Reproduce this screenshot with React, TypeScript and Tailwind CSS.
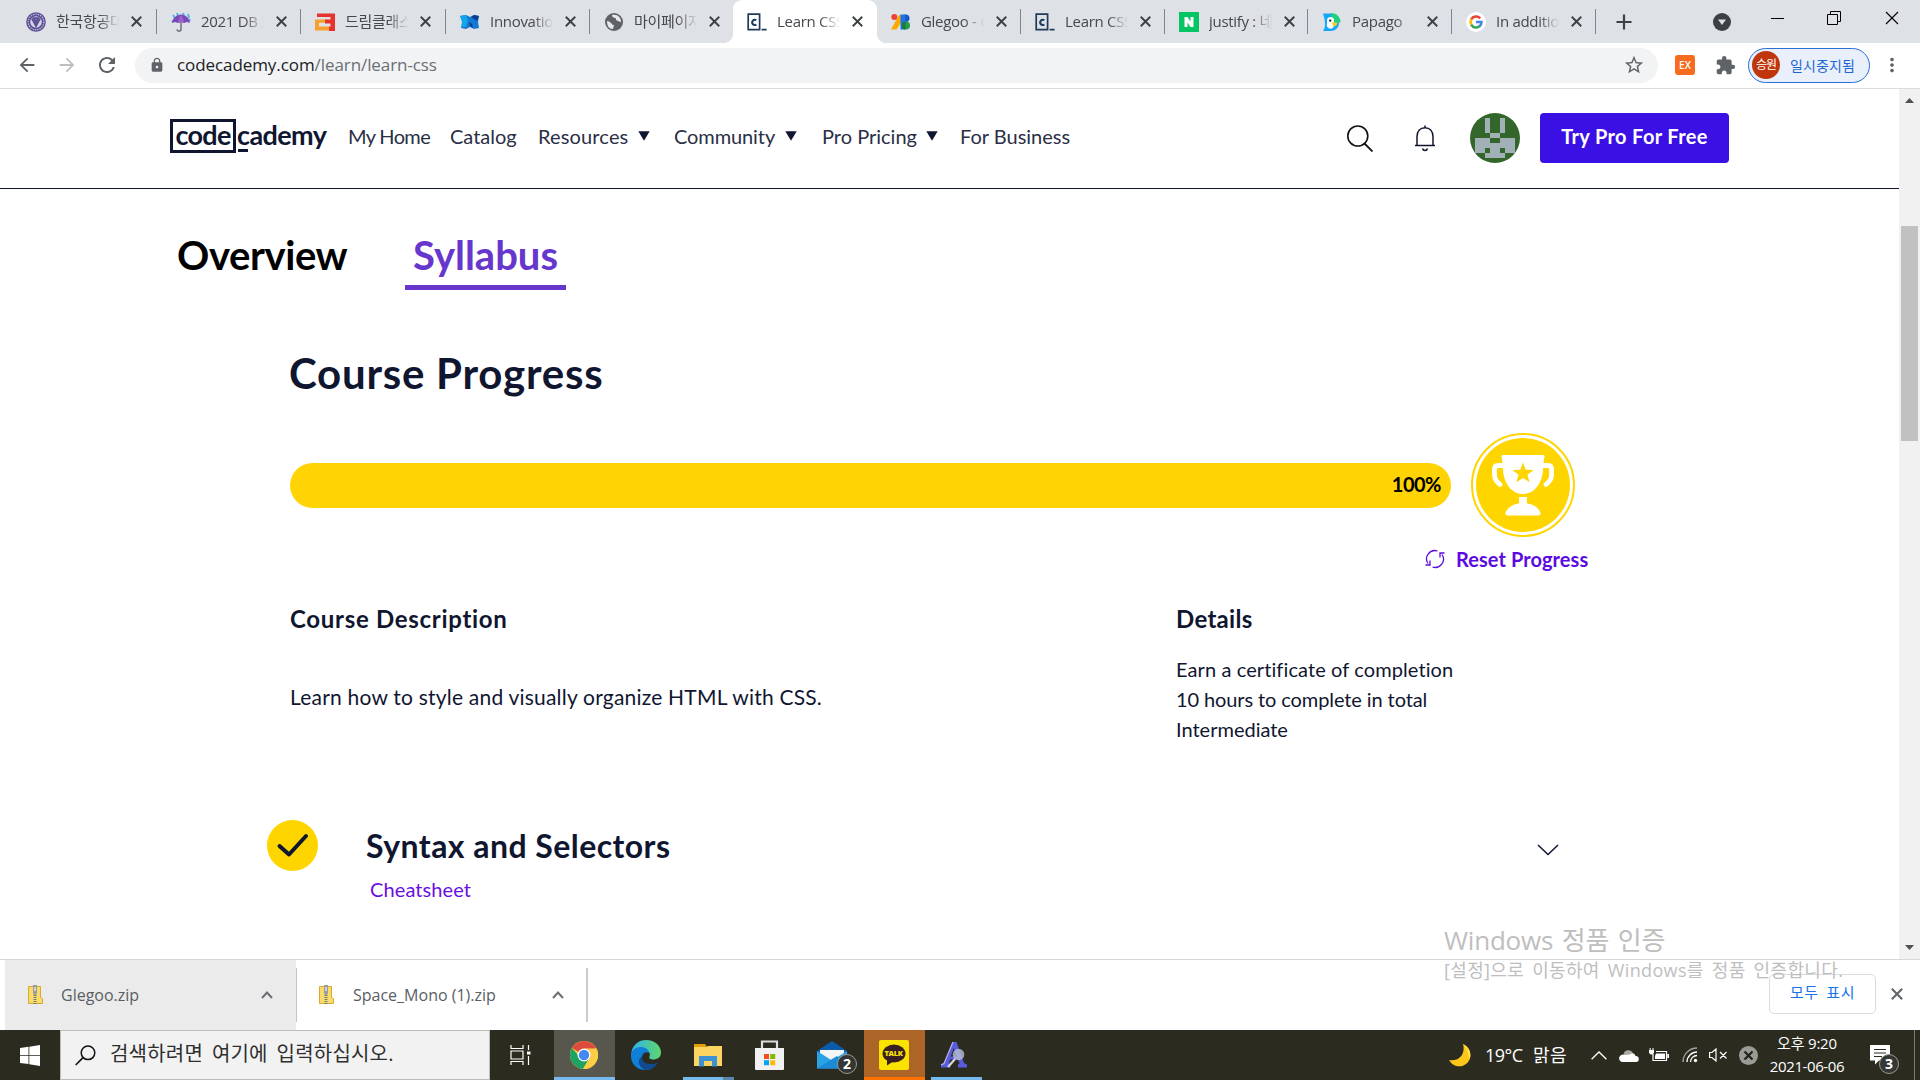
import React from "react";
import { MdExtension, MdLock, MdRefresh, MdStarBorder, MdArrowBack, MdArrowForward, MdMoreVert } from "react-icons/md";

const UI = "font-['Open_Sans','Noto_Sans_CJK_KR',sans-serif]";
const APERCU = "font-['Lato','Noto_Sans_CJK_KR',sans-serif] [font-variant-ligatures:none]";

function CodecademyMark() {
  return (
    <svg width="20" height="20" viewBox="0 0 20 20" className="shrink-0">
      <path d="M1.200 2.200h11.400v15.400H1.200z M14.600 17.600h5" fill="none" stroke="#1f3b5c" strokeWidth="1.700" />
      <path d="M9.300 8.300a2.500 2.700 0 1 0 0 4.200" fill="none" stroke="#1f3b5c" strokeWidth="2" />
    </svg>
  );
}

function Favicon({ kind }: { kind: string }) {
  switch (kind) {
    case "univ":
      return (
        <svg width="20" height="20" viewBox="0 0 20 20" className="shrink-0">
          <circle cx="10" cy="10" r="9.800" fill="#5b4f96" />
          <circle cx="10" cy="10" r="7.800" fill="none" stroke="#c9c5de" strokeWidth="1.200" strokeDasharray="1.400 1" />
          <circle cx="10" cy="10" r="5.800" fill="#d7d4e6" />
          <path d="M6 6.500l4 7.500 4-7.500M8 6.200h4L10 10z" fill="none" stroke="#5b4f96" strokeWidth="1.800" />
        </svg>
      );
    case "umbrella":
      return (
        <svg width="20" height="20" viewBox="0 0 20 20" className="shrink-0">
          <path d="M2 3l2 3M6 1l1 3M12 1l1 3M17 2l1 4M18 7l1 2M3 8L1 10" stroke="#4db4ea" strokeWidth="2" />
          <path d="M1 11C2 5 6 3 10 2.500c4 .5 8 2.500 9 8.500l-3-1-3 1-3-1-3 1-3-1z" fill="#7b48b4" />
          <path d="M7 11c.4-4 1.600-6 3-8 1.400 2 2.600 4 3 8l-3-1z" fill="#9a63cf" />
          <path d="M10 10v7.200a1.900 1.900 0 0 1-3.800 0" fill="none" stroke="#78828c" strokeWidth="1.700" />
        </svg>
      );
    case "dream":
      return (
        <svg width="20" height="20" viewBox="0 0 20 20" className="shrink-0">
          <path d="M2 1.500h18V19h-4.500V5H2z" fill="#e8322c" />
          <path d="M0 7.500h13v3.300H4v3.700h13V18.500H0z" fill="#f6a030" />
          <path d="M10 7.500h6v4h-6zM14 14.500h6V19h-6z" fill="#e8322c" />
        </svg>
      );
    case "innovation":
      return (
        <svg width="20" height="20" viewBox="0 0 20 20" className="shrink-0">
          <path d="M0 4l6-1 4 2 4-2 5 1-1 6 1 6-5 1-4-2-4 2-5-1 2-6z" fill="#1478d4" />
          <path d="M0 4l6-1 2 5-2 7-5 0 1-5z" fill="#12a5ea" />
          <path d="M11 5l3-2 5 1-2 5z" fill="#0b3f8e" />
          <path d="M9 10l3 2 1 4-3-2z" fill="#0b3f8e" />
        </svg>
      );
    case "globe":
      return (
        <svg width="20" height="20" viewBox="0 0 20 20" className="shrink-0">
          <circle cx="10" cy="10" r="9" fill="#5f6368" />
          <path d="M3 9c2 0 3 1 4 2s1 2 3 2l-1 4c-4 0-6-3-6-8zM8 3c0 2 1 2.500 3 3s0 2 2 2.500 2 1.500 4 1.500c0-4-3-8-9-7z" fill="#e6e8ea" />
        </svg>
      );
    case "fonts":
      return (
        <svg width="20" height="20" viewBox="0 0 20 20" className="shrink-0">
          <path d="M8 3h3v6L5.500 17.500H0z" fill="#fbaa00" />
          <circle cx="3.300" cy="5" r="3" fill="#ea4335" />
          <circle cx="14.700" cy="6.300" r="3.800" fill="#1558c0" />
          <circle cx="15" cy="13.500" r="4" fill="#2a9c4a" />
          <path d="M9.500 2.500h5v15h-5z" fill="#1a73e8" />
          <path d="M14.500 9.500a4 4 0 0 0 0 8z" fill="#1b7d3a" />
        </svg>
      );
    case "naver":
      return (
        <svg width="20" height="20" viewBox="0 0 20 20" className="shrink-0">
          <path d="M0 0h20v20H0z" fill="#05c463" />
          <path d="M5.500 5h3l3 4.600V5h3v10h-3l-3-4.600V15h-3z" fill="#fff" />
        </svg>
      );
    case "papago":
      return (
        <svg width="20" height="20" viewBox="0 0 20 20" className="shrink-0">
          <path d="M1 1.500h9l7 9C17 16 13 19 9 19H1c2-3 2-5 2-8C3 7 1.500 4 1 1.500z" fill="#12a8fa" />
          <path d="M9 1c5.500 0 9.500 4 9.500 9.500H9z" fill="#1fd07e" />
          <path d="M5 8.500a3.500 3.500 0 0 1 7 0v5.500a3.500 3.500 0 0 1-7-2z" fill="#fff" />
          <circle cx="8.200" cy="8.600" r="1.200" fill="#222" />
          <path d="M10 10.500h5.500q-.5 4-4.500 4z" fill="#ffcc22" />
        </svg>
      );
    case "google":
      return (
        <svg width="20" height="20" viewBox="0 0 20 20" className="shrink-0">
          <circle cx="10" cy="10" r="10" fill="#fff" />
          <path d="M5.200 7.400A5.600 5.600 0 0 1 14.200 6.300" fill="none" stroke="#ea4335" strokeWidth="2.600" />
          <path d="M5.200 12.600a5.600 5.600 0 0 1 0-5.200" fill="none" stroke="#fbbc05" strokeWidth="2.600" />
          <path d="M13.800 14.100a5.600 5.600 0 0 1-8.600-1.500" fill="none" stroke="#34a853" strokeWidth="2.600" />
          <path d="M10 10.100h5.500a5.400 5.400 0 0 1-1.900 4.100" fill="none" stroke="#4285f4" strokeWidth="2.500" />
        </svg>
      );
    default:
      return <CodecademyMark />;
  }
}

function Cross({ size, color, width }: { size: number; color: string; width: number }) {
  return (
    <svg width={size} height={size} viewBox="0 0 10 10" className="shrink-0">
      <path d="M.7.7l8.600 8.600M9.300.7L.7 9.300" stroke={color} strokeWidth={width} />
    </svg>
  );
}

const tabs = [
  { icon: "univ", title: "한국항공대", sep: true, width: "w-[145px]" },
  { icon: "umbrella", title: "2021 DB 보", sep: true, width: "w-36" },
  { icon: "dream", title: "드림클래스", sep: true, width: "w-[145px]" },
  { icon: "innovation", title: "Innovation", sep: true, width: "w-36" },
  { icon: "globe", title: "마이페이지", sep: false, width: "w-[143px]" },
  { icon: "cc", title: "Learn CSS", active: true, sep: false, width: "w-36" },
  { icon: "fonts", title: "Glegoo - G", sep: true, width: "w-36" },
  { icon: "cc", title: "Learn CSS", sep: true, width: "w-36" },
  { icon: "naver", title: "justify : 네", sep: true, width: "w-[143px]" },
  { icon: "papago", title: "Papago", sep: true, width: "w-36" },
  { icon: "google", title: "In addition", sep: true, width: "w-36" },
];

function TabStrip() {
  return (
    <div className="flex h-[43px] bg-[#dee1e6] pl-3">
      {tabs.map((t, i) => (
        <div
          key={i}
          className={
            (t.active
              ? "relative flex h-[43px] shrink-0 items-center rounded-t-[9px] bg-white pl-3.5 "
              : "relative flex h-[43px] shrink-0 items-center pl-3.5 ") + t.width
          }
        >
          {t.active && (
            <>
              <span className="absolute -left-2.5 bottom-0 size-2.5 bg-[radial-gradient(circle_at_0_0,#dee1e6_10px,#fff_10.5px)]" />
              <span className="absolute -right-2.5 bottom-0 z-10 size-2.5 bg-[radial-gradient(circle_at_100%_0,#dee1e6_10px,#fff_10.5px)]" />
            </>
          )}
          <Favicon kind={t.icon} />
          <span className="mb-0.5 ml-2.5 w-[66px] overflow-hidden whitespace-nowrap text-[15px] leading-5 tracking-[-0.3px] text-[#45484c] [mask-image:linear-gradient(to_right,#000_65%,transparent_96%)]">
            {t.title}
          </span>
          <span className="ml-[9px] flex w-3">
            <Cross size={11} color="#3c4043" width={1.7} />
          </span>
          {t.sep && <span className="absolute right-0 top-[9px] h-[25px] w-px bg-[#80858b]" />}
        </div>
      ))}
      <div className="flex flex-1 items-center">
        <svg width="16" height="16" viewBox="0 0 16 16" className="ml-5">
          <path d="M8 .5v15M.5 8h15" stroke="#3c4043" strokeWidth="2.200" />
        </svg>
        <svg width="18" height="18" viewBox="0 0 18 18" className="ml-[81px]">
          <circle cx="9" cy="9" r="9" fill="#3c4043" />
          <path d="M5 6.500h8l-4 5.500z" fill="#dee1e6" />
        </svg>
        <div className="mb-[7px] ml-10 flex items-center">
          <span className="h-px w-[13px] bg-black" />
          <svg width="14" height="14" viewBox="0 0 14 14" className="ml-[43px]">
            <path d="M.5 3.500h10v10H.5zM3.500 3.500v-3h10v10h-3" fill="none" stroke="#000" />
          </svg>
          <span className="ml-11 flex">
            <Cross size={14} color="#000" width={0.8} />
          </span>
        </div>
      </div>
    </div>
  );
}

function Toolbar() {
  return (
    <div className="flex h-[46px] items-center border-b border-[#d9dbde] bg-white pb-px text-[#5f6368]">
      <MdArrowBack className="ml-4 size-[22px] shrink-0" />
      <MdArrowForward className="ml-[18px] size-[22px] shrink-0 text-[#bcbec1]" />
      <MdRefresh className="ml-[17px] size-6 shrink-0" />
      <div className="ml-4 flex h-[35px] w-[1523px] shrink-0 items-center rounded-full bg-[#f1f3f4] pl-3.5">
        <MdLock className="size-4 shrink-0" />
        <span className="ml-3 w-[1446px] whitespace-nowrap text-[17px] leading-6 tracking-[-0.08px] text-[#6b6f74]">
          <span className="text-[#202124]">codecademy.com</span>/learn/learn-css
        </span>
        <MdStarBorder className="size-[22px] shrink-0" />
      </div>
      <span className="ml-[17px] flex size-5 shrink-0 items-center justify-center rounded-[3px] bg-[#f76c1e] text-[10px] font-semibold leading-none text-white">
        EX
      </span>
      <MdExtension className="ml-5 size-[21px] shrink-0" />
      <div className="ml-3 flex h-[35px] w-[122px] shrink-0 items-center rounded-full border-[1.5px] border-[#2a6fd6] bg-[#e9f0fc] pl-[3px]">
        <span className="flex size-7 items-center justify-center rounded-full bg-[#c0360c] text-[12px] tracking-[-1px] text-white">
          승원
        </span>
        <span className="ml-[10px] whitespace-nowrap text-[14px] tracking-[0.1px] text-[#1c66d2]">일시중지됨</span>
      </div>
      <MdMoreVert className="ml-[11px] size-[22px] shrink-0" />
    </div>
  );
}

function Logo() {
  return (
    <div className="mb-[5px] flex h-[34px] w-[178px] text-[27px] font-bold leading-[29px] text-[#10162f]">
      <span className="flex w-[66px] justify-center border-[3px] border-[#10162f] leading-[25px] tracking-[-0.7px]">code</span>
      <span className="relative ml-px whitespace-nowrap leading-[31px] tracking-[-0.6px]">
        cademy
        <span className="absolute left-px top-[30px] h-[3px] w-2.5 bg-[#10162f]" />
      </span>
    </div>
  );
}

function Caret() {
  return (
    <svg width="12" height="10" viewBox="0 0 12 10" className="shrink-0">
      <path d="M.3.3h11.400L6 9.700z" fill="#10162f" />
    </svg>
  );
}

function Avatar() {
  return (
    <svg width="50" height="50" viewBox="0 0 50 50" className="ml-[34px] shrink-0">
      <circle cx="25" cy="25" r="25" fill="#32662a" />
      <path
        d="M15 5h5v15h-5zM30 5h5v15h-5zM20 20h10v5H20zM5 25h15v5h10v-5h15v15H35v5H15v-5H5z"
        fill="#a2b0b7"
      />
      <path d="M15 35h5v5h-5zM30 35h5v5h-5z" fill="#32662a" />
    </svg>
  );
}

function Header() {
  return (
    <header className="flex h-[100px] shrink-0 items-center border-b border-[#10162f] pb-px pl-[170px] text-[20px] leading-[26px] text-[#10162f]">
      <Logo />
      <nav className="mb-1 flex items-center whitespace-nowrap text-[#2a2f45]">
        <span className="w-[102px] tracking-[-0.65px]">My Home</span>
        <span className="w-[88px]">Catalog</span>
        <span className="w-[100px] tracking-[0.15px]">Resources</span>
        <Caret />
        <span className="ml-6 w-[111px] tracking-[-0.1px]">Community</span>
        <Caret />
        <span className="ml-[25px] w-[104px]">Pro Pricing</span>
        <Caret />
        <span className="ml-[22px] w-[387px]">For Business</span>
      </nav>
      <svg width="26" height="27" viewBox="0 0 26 27" className="shrink-0">
        <circle cx="10.800" cy="11" r="10" fill="none" stroke="#111" strokeWidth="1.600" />
        <path d="M17.500 18.500l8 8" stroke="#111" strokeWidth="1.800" />
      </svg>
      <svg width="22" height="27" viewBox="0 0 22 27" className="ml-[41px] shrink-0">
        <path d="M11 .5v2.500M1 20.500h20M3 20.500V12c0-6 3.500-9.300 8-9.300s8 3.300 8 9.300v8.500M8.500 23.500c.8 2.700 4.200 2.700 5 0" fill="none" stroke="#10162f" strokeWidth="1.500" />
      </svg>
      <Avatar />
      <button className="ml-5 h-[50px] w-[189px] shrink-0 rounded bg-[#3a10e5] pb-1 text-[20px] font-bold tracking-[0.35px] text-white">
        Try Pro For Free
      </button>
    </header>
  );
}

function Trophy() {
  return (
    <svg width="104" height="104" viewBox="0 0 104 104" className="ml-5 shrink-0">
      <circle cx="52" cy="52" r="51" fill="#fff" stroke="#ffd500" strokeWidth="2" />
      <circle cx="52" cy="52" r="47" fill="#ffd500" />
      <path d="M32 22h40a1.500 1.500 0 0 1 1.500 2c-1 3-1 8-1.500 13-1 14-9 24-20 24s-19-10-20-24c-.5-5-.5-10-1.500-13a1.500 1.500 0 0 1 1.500-2z" fill="#fff" />
      <path d="M32 32.500h-5q-3.500 0-3.500 4v6q0 4.500 5.500 9M72 32.500h5q3.500 0 3.500 4v6q0 4.500-5.500 9" fill="none" stroke="#fff" strokeWidth="4.800" strokeLinecap="round" />
      <path d="M48 64h8v6.500c7 1 11 4 13.500 9q.5 3-2 3h-31q-2.500 0-2-3c2.500-5 6.500-8 13.500-9z" fill="#fff" />
      <path d="M52 29.500l2.700 7.200 8 .3-6.300 4.800 2.200 7.400-6.600-4.300-6.600 4.300 2.200-7.400-6.300-4.800 8-.3z" fill="#ffd500" />
    </svg>
  );
}

function CoursePage() {
  return (
    <div className={"flex h-[870px] overflow-hidden bg-white " + APERCU}>
      <div className="flex w-[1899px] flex-col">
        <Header />
        <div className="mt-9 flex h-[65px] shrink-0 pl-[177px] text-[40px] font-bold leading-[61px] text-black">
          <span className="w-[228px] tracking-[-0.4px]">Overview</span>
          <span className="w-[161px] border-b-[5px] border-[#6636cd] text-center text-[#6636cd]">Syllabus</span>
        </div>
        <h1 className="mt-[55px] h-14 pl-[289px] text-[42px] font-bold leading-[56px] tracking-[0.75px] text-[#10162f]">Course Progress</h1>
        <div className="mt-8 flex items-center pl-[290px]">
          <div className="flex h-[45px] w-[1161px] items-center justify-end rounded-full bg-[#ffd304] pb-[3px] pr-[10px] text-[20px] font-bold tracking-[-0.5px] text-black">
            100%
          </div>
          <Trophy />
        </div>
        <div className="mt-[7px] flex h-[30px] items-center pl-[1425px] text-[#5b0be0]">
          <svg width="20" height="20" viewBox="0 0 20 20">
            <path d="M3 14.500A8.300 8.300 0 0 1 12.500 2M17 5.500A8.300 8.300 0 0 1 7.500 18M15 8.500V4h4.500M5 11.500V16H.5" fill="none" stroke="#5b0be0" strokeWidth="1.300" />
          </svg>
          <span className="ml-[11px] text-[20px] font-bold tracking-[0.07px]">Reset Progress</span>
        </div>
        <div className="mt-[27px] grid grid-cols-[886px_1fr] pl-[290px] text-[#10162f]">
          <div>
            <h2 className="h-9 text-[24px] font-bold leading-9 tracking-[0.7px]">Course Description</h2>
            <p className="mt-[45px] text-[21px] leading-[30px] tracking-[0.21px]">Learn how to style and visually organize HTML with CSS.</p>
          </div>
          <div>
            <h2 className="h-9 text-[24px] font-bold leading-9 tracking-[0.3px]">Details</h2>
            <div className="mt-[17px] text-[20px] leading-[30px]">
              <p className="tracking-[0.1px]">Earn a certificate of completion</p>
              <p className="tracking-[-0.1px]">10 hours to complete in total</p>
              <p>Intermediate</p>
            </div>
          </div>
        </div>
        <div className="mt-[76px] flex pl-[267px]">
          <svg width="51" height="51" viewBox="0 0 51 51" className="shrink-0">
            <circle cx="25.500" cy="25.500" r="25.500" fill="#ffd500" />
            <path d="M12.500 26l9.500 8.500 17-18.500" fill="none" stroke="#10162f" strokeWidth="4" strokeLinecap="round" strokeLinejoin="round" />
          </svg>
          <div className="ml-12 w-[1171px]">
            <h2 className="mt-1.5 text-[32px] font-bold leading-10 tracking-[0.45px] text-[#10162f]">Syntax and Selectors</h2>
            <p className="mt-2 pl-1 text-[20px] leading-[30px] tracking-[0.1px] text-[#6a0fe0]">Cheatsheet</p>
          </div>
          <svg width="22" height="12" viewBox="0 0 22 12" className="mt-6">
            <path d="M1 1l10 9.500L21 1" fill="none" stroke="#10162f" strokeWidth="1.500" />
          </svg>
        </div>
      </div>
      <div className="flex w-[21px] flex-col items-center bg-[#f1f1f1]">
        <svg width="9" height="5" viewBox="0 0 9 5" className="mt-[9px]">
          <path d="M0 5h9L4.500 0z" fill="#505050" />
        </svg>
        <span className="mt-[123px] h-[215px] w-[17px] bg-[#c1c1c1]" />
        <svg width="9" height="5" viewBox="0 0 9 5" className="mt-[504px]">
          <path d="M0 0h9L4.500 5z" fill="#505050" />
        </svg>
      </div>
    </div>
  );
}

function ZipIcon() {
  return (
    <svg width="15" height="20" viewBox="0 0 15 20" className="shrink-0">
      <path d="M.5 1.500h12v11l2 1v5H.5z" fill="#f8dc6c" stroke="#d8a92c" />
      <path d="M5 0h4v8a2 2 0 0 1-4 0z" fill="#9a9c9e" />
      <path d="M7 10v9" stroke="#77797b" strokeWidth="3" strokeDasharray="1 1" />
      <path d="M6.300 2h1.400v4H6.300z" fill="#e9e9e9" />
    </svg>
  );
}

function UpCaret() {
  return (
    <svg width="12" height="8" viewBox="0 0 12 8" className="shrink-0">
      <path d="M1 7l5-5.500L11 7" fill="none" stroke="#6b6f74" strokeWidth="2" />
    </svg>
  );
}

function DownloadShelf() {
  return (
    <div className="flex h-[71px] border-t border-[#d5d7da] bg-white pl-[5px] text-[16px] leading-6 text-[#5a5e63]">
      <div className="flex w-[291px] items-center bg-[#ebebeb] pl-[23px]">
        <ZipIcon />
        <span className="ml-[18px] w-[200px] whitespace-nowrap">Glegoo.zip</span>
        <UpCaret />
      </div>
      <div className="my-2 flex w-[292px] items-center border-r-2 border-l border-l-[#c3c5c8] border-r-[#c9cbce] pl-[22px]">
        <ZipIcon />
        <span className="ml-[19px] w-[199px] whitespace-nowrap">Space_Mono (1).zip</span>
        <UpCaret />
      </div>
      <div className="ml-[1181px] mt-3.5 flex h-10 items-center">
        <div className="flex h-10 w-[107px] items-center justify-center rounded-[5px] border border-[#dadce0] pb-1 text-[15px] tracking-[0.6px] text-[#1a73e8] [word-spacing:3px]">
          모두 표시
        </div>
        <span className="ml-[15px]">
          <Cross size={12} color="#5f6368" width={1.7} />
        </span>
      </div>
    </div>
  );
}

function ChromeIcon() {
  return (
    <svg width="28" height="28" viewBox="0 0 28 28">
      <circle cx="14" cy="14" r="14" fill="#fbc934" />
      <path d="M14 14L1.880 7A14 14 0 0 1 26.120 7z" fill="#dd4b3e" />
      <path d="M1.880 7A14 14 0 0 0 13 28l6.500-11L14 14H8z" fill="#1da462" />
      <path d="M14 7.500h12.400A14 14 0 0 1 13 28l6.300-10.500z" fill="#fdcd45" />
      <circle cx="14" cy="14" r="6.500" fill="#fff" />
      <circle cx="14" cy="14" r="5.200" fill="#4688f1" />
    </svg>
  );
}

function EdgeIcon() {
  return (
    <svg width="30" height="30" viewBox="0 0 30 30">
      <defs>
        <linearGradient id="edge" x1="0" x2="1">
          <stop offset="0" stopColor="#2fb4ee" />
          <stop offset="1" stopColor="#5fd66b" />
        </linearGradient>
      </defs>
      <path d="M.5 12C2 4.500 8 0 15 0c9 0 15 6 15 12.500 0 5-4 7-7.500 7-3 0-5-1-4-3 1.500-3-1-7-6-7-6 0-10 4-12 8z" fill="url(#edge)" />
      <path d="M0 16c0-6 5-9 10-9 4 0 8 2.500 8 6-4-2-7 1-7 5 0 5 5 10 12 8-2 2.500-5 4-8.500 4C6 30 0 24 0 16z" fill="#0f7fd8" />
      <path d="M11 17c0 6 6 9 16 5.500C25 27 20 30 15 30c-5-1-8-6-7-10 .5-2 2-3 3-3z" fill="#114a8f" />
    </svg>
  );
}

function FolderIcon() {
  return (
    <svg width="28" height="24" viewBox="0 0 28 24">
      <path d="M0 1h11l2 3H0z" fill="#e3a008" />
      <path d="M0 4h12l2-1h14v20H0z" fill="#fcd462" />
      <path d="M5 13h18v10.500h-5V18h-8v5.500H5z" fill="#3d92d3" />
    </svg>
  );
}

function StoreIcon() {
  return (
    <svg width="29" height="30" viewBox="0 0 29 30">
      <path d="M7 9V1.500h15V9" fill="none" stroke="#dedede" strokeWidth="2.200" />
      <path d="M0 8h29v21q0 1-1 1H1q-1 0-1-1z" fill="#f1f1f3" />
      <path d="M9 14h5v5H9z" fill="#f25022" />
      <path d="M15.200 14h5v5h-5z" fill="#7fba00" />
      <path d="M9 20.200h5v5H9z" fill="#00a4ef" />
      <path d="M15.200 20.200h5v5h-5z" fill="#ffb900" />
    </svg>
  );
}

function MailIcon() {
  return (
    <svg width="30" height="28" viewBox="0 0 30 28">
      <path d="M0 10L15 0l15 10v8H0z" fill="#0a5ca8" />
      <path d="M3 9h24v8L15 21 3 17z" fill="#f3f5f7" />
      <path d="M0 10l15 9.500L30 10v17.500H0z" fill="#2aa3e6" />
      <path d="M0 27.500L20 15l10 12.500z" fill="#1d8ad6" />
    </svg>
  );
}

function TalkIcon() {
  return (
    <span className="relative flex size-[30px] items-center justify-center rounded-[2px] bg-[#fbe300]">
      <svg width="24" height="22" viewBox="0 0 24 22" className="absolute">
        <ellipse cx="12" cy="9.500" rx="11.500" ry="9" fill="#3b2023" />
        <path d="M5 15l0 6.500 7-4.500z" fill="#3b2023" />
      </svg>
      <span className="relative mb-[3px] text-[7.500px] font-extrabold leading-none tracking-[-0.4px] text-[#fbe300]">TALK</span>
    </span>
  );
}

function LetterIcon() {
  return (
    <svg width="27" height="28" viewBox="0 0 27 28">
      <path d="M11.500 1h4l7.500 21 3 1.500v3h-9v-3l1.500-1-1.300-4h-8l-1.200 4 1.500 1v3H0v-3l3-1.500z" fill="#5a5adc" />
      <path d="M12.800 7l3 8.500H9.800z" fill="#2b2b20" />
      <path d="M12 1L3 22.500l-3 1.500" fill="none" stroke="#b4b4f2" strokeWidth="1.200" />
      <circle cx="17.500" cy="13.500" r="5.800" fill="#b9c0d8" opacity=".8" />
      <path d="M14 18l-7 8" stroke="#d5d7dc" strokeWidth="2.200" />
    </svg>
  );
}

function CountBadge({ n, className }: { n: number; className: string }) {
  return (
    <span className={"absolute flex size-5 items-center justify-center rounded-full border border-[#9b9b95] bg-[#343733] text-[14px] font-bold leading-none text-white " + className}>
      {n}
    </span>
  );
}

function Taskbar() {
  return (
    <div className="flex h-[50px] bg-[#2b2b20] text-white">
      <div className="flex w-[60px] items-center pl-5">
        <svg width="20" height="21" viewBox="0 0 20 21">
          <path d="M0 3l8.500-1.200v8.200H0zM9.300 1.700L20 0v10H9.300zM0 10.800h8.500V19L0 17.900zM9.300 10.800H20V21L9.300 19.300z" fill="#fff" />
        </svg>
      </div>
      <div className="flex w-[430px] items-center border border-[#bdbdbd] bg-[#f2f2f2] pl-3.5 text-[#2e2e2e]">
        <svg width="21" height="21" viewBox="0 0 21 21">
          <circle cx="13" cy="7.800" r="6.800" fill="none" stroke="#111" strokeWidth="1.500" />
          <path d="M8 12.600L.7 20" stroke="#111" strokeWidth="1.600" />
        </svg>
        <span className="mb-0.5 ml-3.5 whitespace-nowrap text-[20px] leading-7 tracking-[0.2px] [word-spacing:3.5px]">검색하려면 여기에 입력하십시오.</span>
      </div>
      <div className="flex w-16 items-center pl-5">
        <svg width="21" height="20" viewBox="0 0 21 20">
          <path d="M1 0v3.500h12V0M1 20v-3.500h12V20M1 6h12v8H1zM18.500 0v5M18.500 11v9" fill="none" stroke="#fff" strokeWidth="1.200" />
          <path d="M17 6.500h3.500v3H17z" fill="#fff" />
        </svg>
      </div>
      <div className="flex w-[61px] items-center justify-center border-b-[3px] border-[#76b9ed] bg-[#57574d] pr-0.5 pt-0.5">
        <ChromeIcon />
      </div>
      <div className="flex w-[62px] items-center justify-center">
        <EdgeIcon />
      </div>
      <div className="ml-1.5 flex w-[51px] flex-col">
        <div className="flex h-[47px] items-center justify-center pr-0.5 pt-0.5">
          <FolderIcon />
        </div>
        <div className="flex h-[3px] bg-[#76b9ed]">
          <span className="ml-10 h-[3px] w-[11px] bg-[#5b87ab]" />
        </div>
      </div>
      <div className="ml-[21px] flex w-[29px] items-center">
        <StoreIcon />
      </div>
      <div className="relative ml-[33px] flex w-[47px] items-center">
        <MailIcon />
        <CountBadge n={2} className="left-5 top-6" />
      </div>
      <div className="flex w-[61px] items-center justify-center border-b-[3px] border-[#ff7200] bg-[#ad6527] pr-0.5 pt-[3px]">
        <TalkIcon />
      </div>
      <div className="ml-1.5 flex w-[51px] items-center justify-center border-b-[3px] border-[#76b9ed] pr-1 pt-0.5">
        <LetterIcon />
      </div>
      <div className="ml-[467px] flex items-center">
        <svg width="22" height="23" viewBox="0 0 22 23">
          <path d="M14 0c6 3 9 9 6.500 15.500C17 24 5 25 0 16c9 2 17-5 14-16z" fill="#ffc61a" />
          <path d="M14 0c6 3 9 9 6.500 15.500-2-7-2-11-6.500-15.500z" fill="#ffe24a" />
        </svg>
        <span className="ml-3.5 w-12 whitespace-nowrap text-[18px] tracking-[-0.5px]">19°C</span>
        <span className="w-[58px] whitespace-nowrap text-[18px] tracking-[0.5px]">맑음</span>
        <svg width="16" height="9" viewBox="0 0 16 9">
          <path d="M.6 8.300L8 1l7.400 7.300" fill="none" stroke="#fff" strokeWidth="1.300" />
        </svg>
        <svg width="20" height="13" viewBox="0 0 20 13" className="ml-3">
          <path d="M4.500 6a5 5 0 0 1 9.500-2l-9 7z" fill="#a9a9a4" />
          <path d="M4 13a3.700 3.700 0 1 1 1.500-7L11 5.500c2-2.500 5-1 5.500 1.500A3 3 0 0 1 17 13z" fill="#fff" />
        </svg>
        <svg width="20" height="14" viewBox="0 0 20 14" className="ml-2.5">
          <path d="M4 6v6.500h13.500v-9H7" fill="none" stroke="#fff" strokeWidth="1.200" />
          <path d="M7 5.500h9v5.500H6V8zM18.300 6H20v4h-1.700zM0 2h5v3L3.300 6.500H1.700L0 5zM.7 0h1v2h-1zM3.500 0h1v2h-1z" fill="#fff" />
        </svg>
        <svg width="16" height="16" viewBox="0 0 16 16" className="ml-[13px]">
          <path d="M1 15A14 14 0 0 1 15 1" fill="none" stroke="#a5a5a0" strokeWidth="1.300" />
          <path d="M5 15A10 10 0 0 1 15 5M8.500 15A6.500 6.500 0 0 1 15 8.500" fill="none" stroke="#fff" strokeWidth="1.300" />
          <circle cx="13.500" cy="13.500" r="1.700" fill="#fff" />
        </svg>
        <svg width="19" height="14" viewBox="0 0 19 14" className="ml-[11px]">
          <path d="M.6 4.500H3L7 1v12L3 9.500H.6zM11 4l6.500 6.500M17.500 4L11 10.500" fill="none" stroke="#fff" strokeWidth="1.200" />
        </svg>
        <svg width="19" height="19" viewBox="0 0 19 19" className="ml-[11px]">
          <circle cx="9.500" cy="9.500" r="9.500" fill="#9b9b95" />
          <path d="M5.500 5.500l8 8M13.500 5.500l-8 8" stroke="#20201a" strokeWidth="2.200" />
        </svg>
        <div className="ml-[7px] flex w-[84px] flex-col items-center whitespace-nowrap text-[15px] leading-[23px]">
          <span className="tracking-[-0.2px]">오후 9:20</span>
          <span className="tracking-[-0.4px]">2021-06-06</span>
        </div>
      </div>
      <div className="relative ml-[21px] flex w-[45px] items-center border-r border-[#7c7c75]">
        <svg width="20" height="20" viewBox="0 0 20 20">
          <path d="M0 0h20v15.500H9L5 19.500v-4H0z" fill="#fff" />
          <path d="M4 4.500h12M4 8h12M4 11.500h8" stroke="#2b2b20" strokeWidth="1.200" />
        </svg>
        <CountBadge n={3} className="left-[9px] top-6" />
      </div>
    </div>
  );
}

function ActivationWatermark() {
  return (
    <div className="pointer-events-none absolute left-[1444px] top-[922px] whitespace-nowrap text-[#bebebe]">
      <p className="text-[26px] leading-[36px] tracking-[-0.2px] [word-spacing:2px]">Windows 정품 인증</p>
      <p className="text-[18px] leading-[24px] tracking-[0.35px] [word-spacing:3px]">[설정]으로 이동하여 Windows를 정품 인증합니다.</p>
    </div>
  );
}

export default function App() {
  return (
    <div className={"relative h-[1080px] w-[1920px] overflow-hidden bg-white " + UI}>
      <TabStrip />
      <Toolbar />
      <CoursePage />
      <DownloadShelf />
      <Taskbar />
      <ActivationWatermark />
    </div>
  );
}
